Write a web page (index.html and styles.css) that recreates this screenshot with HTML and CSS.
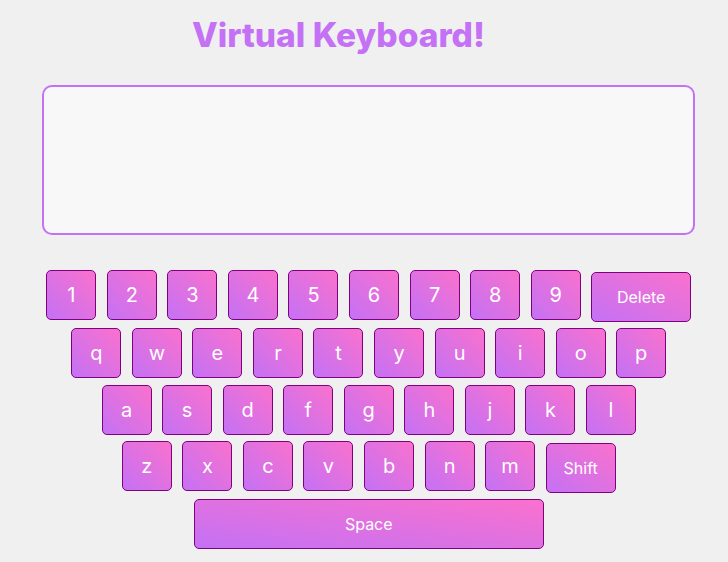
FILE: index.html
```html
<!DOCTYPE html>
<html lang="en">
<head>
<meta charset="utf-8">
<title>Virtual Keyboard</title>
<link rel="stylesheet" href="styles.css">
</head>
<body>
  <header class="header">
    <h1 class="title">Virtual Keyboard!</h1>
  </header>
  <div class="display-wrap">
    <textarea class="display"></textarea>
  </div>
  <div class="keyboard">
    <div class="row">
      <button class="key">1</button><button class="key">2</button><button class="key">3</button><button class="key">4</button><button class="key">5</button><button class="key">6</button><button class="key">7</button><button class="key">8</button><button class="key">9</button><button class="key key-wide key-delete">Delete</button>
    </div>
    <div class="row">
      <button class="key">q</button><button class="key">w</button><button class="key">e</button><button class="key">r</button><button class="key">t</button><button class="key">y</button><button class="key">u</button><button class="key">i</button><button class="key">o</button><button class="key">p</button>
    </div>
    <div class="row row-mid">
      <button class="key">a</button><button class="key">s</button><button class="key">d</button><button class="key">f</button><button class="key">g</button><button class="key">h</button><button class="key">j</button><button class="key">k</button><button class="key">l</button>
    </div>
    <div class="row">
      <button class="key">z</button><button class="key">x</button><button class="key">c</button><button class="key">v</button><button class="key">b</button><button class="key">n</button><button class="key">m</button><button class="key key-wide key-shift">Shift</button>
    </div>
    <div class="row">
      <button class="key key-wide key-space">Space</button>
    </div>
  </div>
</body>
</html>
```
FILE: styles.css
```css
* {
  box-sizing: border-box;
}

body {
  margin: 0;
  background: #f0f0f0;
  font-family: "Inter", "DejaVu Sans", sans-serif;
}

.header {
  padding: 0 51px 0 0;
  text-align: center;
}

.title {
  margin: 0;
  padding-top: 13px;
  font-size: 33.5px;
  line-height: 44px;
  font-weight: 800;
  color: #c471f5;
}

.display-wrap {
  padding: 28px 0 0 42px;
}

.display {
  display: block;
  width: 653px;
  height: 150px;
  margin: 0;
  border: 2px solid #c471f5;
  border-radius: 10px;
  background: #f8f8f8;
  resize: none;
  outline: none;
}

.keyboard {
  display: flex;
  flex-direction: column;
  align-items: center;
  gap: 6px;
  padding: 35px 0 0 9.5px;
}

.row {
  display: flex;
  align-items: flex-start;
  gap: 10.55px;
}

.row-mid {
  margin-top: 1px;
}

.key {
  width: 50px;
  height: 50px;
  padding: 0;
  border: 1px solid #800080;
  border-radius: 5px;
  background: linear-gradient(to top right, #c471f5, #fa71cd);
  color: #ffffff;
  font-family: inherit;
  font-size: 20px;
  font-weight: 400;
  display: flex;
  align-items: center;
  justify-content: center;
}

.key-wide {
  font-size: 16px;
}

.key-delete {
  width: 100px;
  margin-top: 2px;
}

.key-shift {
  width: 70px;
  margin-top: 2px;
}

.key-space {
  width: 350px;
}
```
